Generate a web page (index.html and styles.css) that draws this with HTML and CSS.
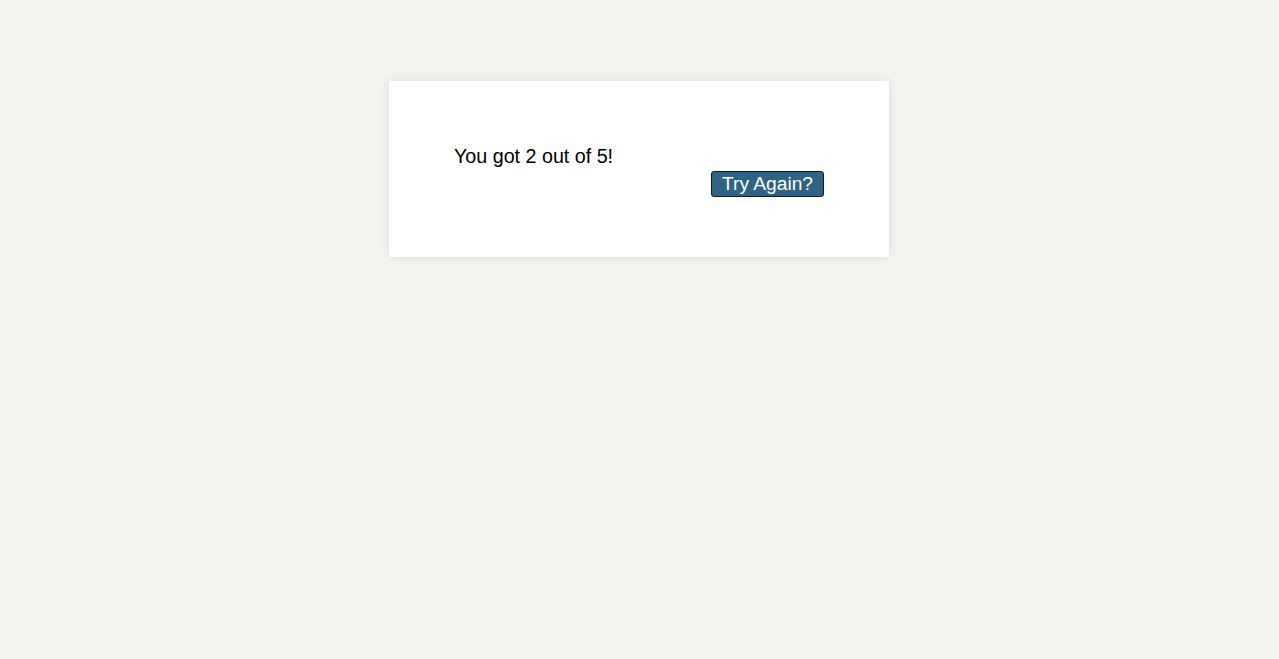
FILE: index.html
```html
<!DOCTYPE html>
<html>
<head>
<meta charset="utf-8">
<link rel="stylesheet" href="styles.css">
</head>
<body>
<div class="card">
  <p class="result">You got 2 out of 5!</p>
  <div class="actions">
    <button class="retry">Try Again?</button>
  </div>
</div>
</body>
</html>
```

FILE: styles.css
```css
html, body {
  margin: 0;
  padding: 0;
}
body {
  background: #f4f3ef;
  font-family: "Liberation Sans", Arial, Helvetica, sans-serif;
  color: #000;
  padding: 81px 1px 0 0;
  min-height: 659px;
  box-sizing: border-box;
}
.card {
  width: 500px;
  box-sizing: border-box;
  margin: 0 auto;
  background: #fff;
  padding: 64px 65px 60px 65px;
  box-shadow: 0 0 10px rgba(0, 0, 0, 0.09);
}
.result {
  margin: 0;
  font-size: 19.7px;
  line-height: 23px;
}
.actions {
  display: flex;
  justify-content: flex-end;
  margin-top: 3px;
}
.retry {
  font-family: "Liberation Sans", Arial, Helvetica, sans-serif;
  font-size: 19.2px;
  line-height: 24px;
  height: 26px;
  padding: 0 10px;
  color: #fff;
  background: #2e6383;
  border: 1px solid #0d1e28;
  border-radius: 3px;
  box-sizing: border-box;
}
```
